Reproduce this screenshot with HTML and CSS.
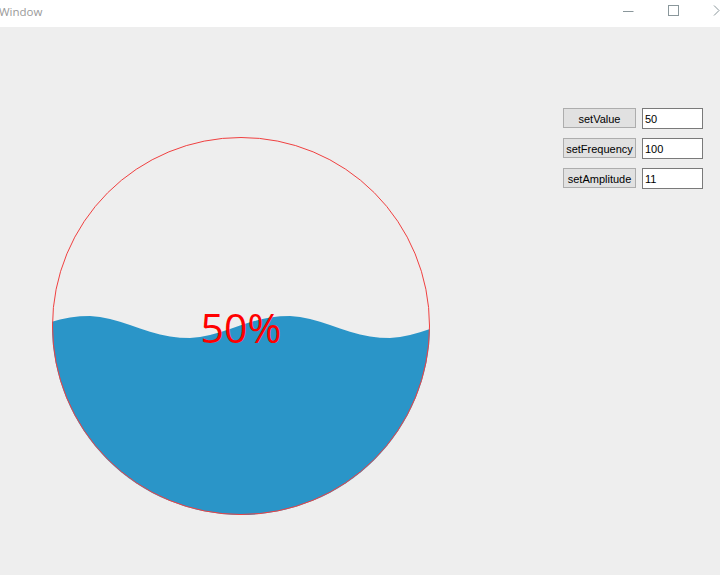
FILE: index.html
```html
<!DOCTYPE html>
<html>
<head>
<meta charset="utf-8">
<link rel="stylesheet" href="styles.css">
</head>
<body>
<div class="titlebar">
  <span class="title">Window</span>
  <div class="controls">
    <svg class="ctl" width="45" height="27" viewBox="0 0 45 27"><line x1="8" y1="11.5" x2="18.5" y2="11.5" stroke="#8a979b" stroke-width="1"/></svg>
    <svg class="ctl" width="45" height="27" viewBox="0 0 45 27"><rect x="8.5" y="5.5" width="10" height="10" fill="none" stroke="#8a979b" stroke-width="1"/></svg>
    <svg class="ctl close" width="15" height="27" viewBox="0 0 15 27"><path d="M9 5.5 L14 10.5 L9 15.5" fill="none" stroke="#8a979b" stroke-width="1"/></svg>
  </div>
</div>
<div class="main">
  <svg class="gauge" width="480" height="548" viewBox="0 0 480 548">
    <defs>
      <clipPath id="c"><circle cx="241" cy="299" r="189"/></clipPath>
    </defs>
    <path clip-path="url(#c)" fill="#2a95c8" d="M50 295.3 L60 292.5 L70 290.4 L80 289.2 L90 289.1 L100 290.0 L110 292.0 L120 294.7 L130 297.9 L140 301.4 L150 304.7 L160 307.5 L170 309.6 L180 310.8 L190 310.9 L200 310.0 L210 308.0 L220 305.3 L230 302.1 L240 298.6 L250 295.3 L260 292.5 L270 290.4 L280 289.2 L290 289.1 L300 290.0 L310 292.0 L320 294.7 L330 297.9 L340 301.4 L350 304.7 L360 307.5 L370 309.6 L380 310.8 L390 310.9 L400 310.0 L410 308.0 L420 305.3 L430 302.1 L440 299 L440 500 L50 500 Z"/>
    <circle cx="241" cy="299" r="188.5" fill="none" stroke="#f04040" stroke-width="1"/>
    <text class="pct" x="241" y="315.5" text-anchor="middle">50%</text>
  </svg>
  <div class="panel">
    <div class="form">
      <button class="btn">setValue</button><input class="field" value="50">
      <button class="btn">setFrequency</button><input class="field" value="100">
      <button class="btn">setAmplitude</button><input class="field" value="11">
    </div>
  </div>
</div>
</body>
</html>
```
FILE: styles.css
```css
html, body {
  margin: 0;
  padding: 0;
  background: #eeeeee;
  width: 720px;
  height: 575px;
  overflow: hidden;
  font-family: "Liberation Sans", Arial, sans-serif;
}
.titlebar {
  height: 27px;
  background: #ffffff;
  display: flex;
  align-items: flex-start;
  justify-content: space-between;
}
.title {
  margin-left: -1px;
  margin-top: 5px;
  font-family: "Open Sans", "Noto Sans", sans-serif;
  font-size: 11.5px;
  color: #9a9a9a;
  line-height: 14px;
}
.controls {
  display: flex;
}
.ctl {
  display: block;
}
.main {
  display: flex;
  height: 548px;
}
.gauge {
  display: block;
  flex: none;
}
.pct {
  font-family: "Open Sans", "Noto Sans", sans-serif;
  font-size: 41px;
  fill: #ff0000;
}
.panel {
  padding-top: 81px;
  padding-left: 83px;
}
.form {
  display: grid;
  grid-template-columns: 73px 61px;
  grid-auto-rows: 21px;
  column-gap: 6px;
  row-gap: 9px;
}
.btn {
  box-sizing: border-box;
  height: 20px;
  margin: 0;
  padding: 1px 0 0 0;
  background: #e1e1e1;
  border: 1px solid #adadad;
  border-radius: 0;
  font-family: "Liberation Sans", Arial, sans-serif;
  font-size: 11px;
  color: #000;
}
.field {
  box-sizing: border-box;
  height: 21px;
  width: 61px;
  margin: 0;
  padding: 0 0 0 2px;
  background: #fff;
  border: 1px solid #7a7a7a;
  border-radius: 0;
  font-family: "Liberation Sans", Arial, sans-serif;
  font-size: 11px;
  color: #000;
  outline: none;
}
```
